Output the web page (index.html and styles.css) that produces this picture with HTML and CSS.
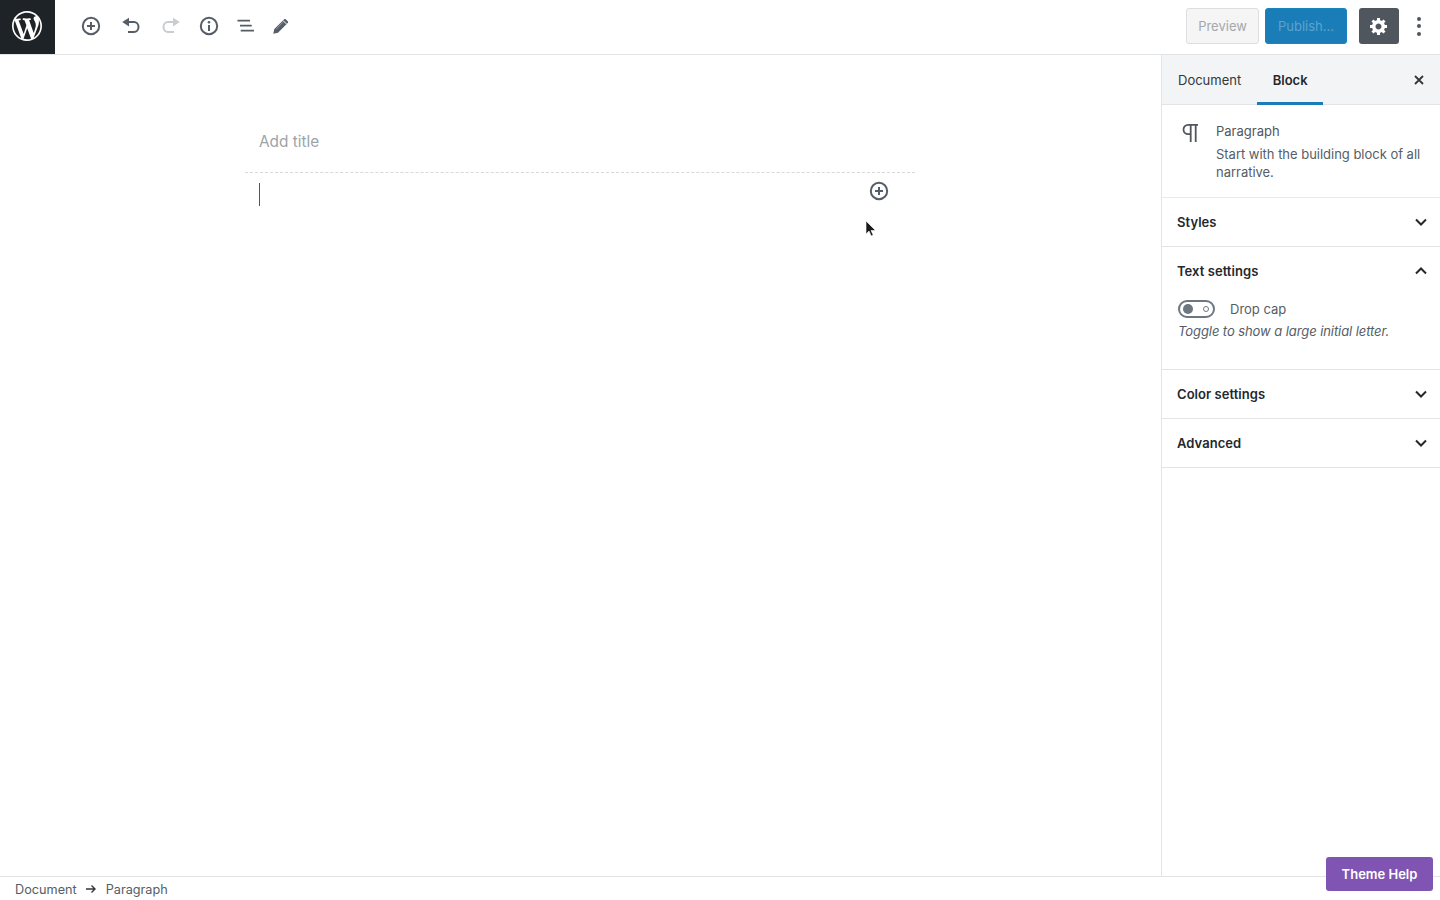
FILE: index.html
```html
<!DOCTYPE html>
<html lang="en">
<head>
<meta charset="utf-8">
<title>Add New Post</title>
<link rel="stylesheet" href="styles.css">
</head>
<body>
<div class="app">
  <header class="topbar">
    <a class="wp-logo">
      <svg viewBox="0 0 20 20" width="30" height="30"><path fill="currentColor" d="M20 10c0-5.51-4.49-10-10-10C4.48 0 0 4.49 0 10c0 5.52 4.48 10 10 10 5.51 0 10-4.48 10-10zM7.78 15.37L4.37 6.22c.55-.02 1.17-.08 1.17-.08.5-.06.44-1.13-.06-1.11 0 0-1.45.11-2.37.11-.18 0-.37 0-.58-.01C4.12 2.69 6.87 1.11 10 1.11c2.33 0 4.45.87 6.05 2.34-.68-.11-1.65.39-1.65 1.58 0 .74.45 1.36.9 2.1.35.61.55 1.36.55 2.46 0 1.49-1.4 5-1.4 5l-3.03-8.37c.54-.02.82-.17.82-.17.5-.05.44-1.25-.06-1.22 0 0-1.44.12-2.38.12-.87 0-2.33-.12-2.33-.12-.5-.03-.56 1.2-.06 1.22l.92.08 1.26 3.41zM17.41 10c.24-.64.74-1.87.43-4.25.7 1.29 1.05 2.71 1.05 4.25 0 3.29-1.73 6.24-4.4 7.78.97-2.59 1.94-5.2 2.92-7.78zM6.1 18.09C3.12 16.65 1.11 13.53 1.11 10c0-1.3.23-2.48.72-3.59C3.25 10.3 4.67 14.2 6.1 18.09zm4.03-6.63l2.58 6.98c-.86.29-1.76.45-2.71.45-.79 0-1.57-.11-2.29-.33.81-2.38 1.62-4.74 2.42-7.1z"/></svg>
    </a>
    <div class="tools">
      <span class="tool"><svg viewBox="0 0 20 20" width="20" height="20"><circle cx="10" cy="10" r="8.2" class="st"/><path d="M10 6v8M6 10h8" class="st"/></svg></span>
      <span class="tool tool-wide"><svg viewBox="0 0 20 20" width="20" height="20"><path d="M7 6h6c2.500 0 4.500 2 4.500 5s-2 5-4.500 5H7" class="st"/><path d="M8 1.800v8.600L1.200 6z" class="fl"/></svg></span>
      <span class="tool tool-wide muted"><svg viewBox="0 0 20 20" width="20" height="20"><path d="M13 6H7c-2.500 0-4.500 2-4.500 5s2 5 4.500 5h6" class="st"/><path d="M12 1.800v8.600L18.800 6z" class="fl"/></svg></span>
      <span class="tool tool-mid"><svg viewBox="0 0 20 20" width="20" height="20"><circle cx="10" cy="10" r="8.2" class="st"/><path d="M10 9v6" class="st"/><circle cx="10" cy="6.200" r="1.300" class="fl"/></svg></span>
      <span class="tool"><svg viewBox="0 0 20 20" width="20" height="20"><path d="M2.500 4.700H15M5 9.700h11.700M5.700 14.700H19" class="st thin"/></svg></span>
      <span class="tool"><svg viewBox="0 0 20 20" width="20" height="20"><path d="M2.300 17.800l1-4.700L13 3.400c.6-.6 1.300-.6 1.900 0l1.800 1.800c.6.6.6 1.300 0 1.900L7 16.800z" class="fl"/><path d="M12 4.500l3.600 3.600" class="slit"/><path d="M5 13.200l7-7" class="slit hair"/></svg></span>
    </div>
    <div class="actions">
      <button class="btn btn-preview">Preview</button>
      <button class="btn btn-publish">Publish...</button>
      <button class="btn btn-settings"><svg viewBox="0 0 20 20" width="20" height="20"><path fill="currentColor" d="M18 12h-2.180c-.17.7-.44 1.350-.81 1.930l1.540 1.540-2.100 2.100-1.540-1.540c-.58.36-1.230.63-1.910.79V19H8v-2.180c-.68-.16-1.330-.43-1.910-.79l-1.540 1.540-2.120-2.120 1.540-1.540c-.36-.58-.63-1.230-.79-1.910H1V9.030h2.170c.16-.7.44-1.350.8-1.940L2.430 5.550l2.100-2.100 1.540 1.540c.58-.37 1.240-.64 1.930-.81V2h3v2.180c.68.16 1.330.43 1.910.79l1.540-1.540 2.120 2.120-1.540 1.540c.36.59.64 1.240.8 1.940H18V12zm-8.500 1.500c1.660 0 3-1.340 3-3s-1.340-3-3-3-3 1.340-3 3 1.340 3 3 3z"/></svg></button>
      <span class="more"><i></i><i></i><i></i></span>
    </div>
  </header>

  <div class="main">
    <main class="editor">
      <div class="column">
        <div class="post-title">Add title</div>
        <div class="block">
          <span class="caret"></span>
          <svg class="inserter" viewBox="0 0 20 20" width="20" height="20"><circle cx="10" cy="10" r="8.200" class="st"/><path d="M10 6v8M6 10h8" class="st"/></svg>
        </div>
      </div>
    </main>

    <aside class="sidebar">
      <div class="tabs">
        <span class="tab">Document</span>
        <span class="tab active">Block</span>
        <svg class="close" viewBox="0 0 12 12" width="12" height="12"><path d="M2 2l8 8M10 2l-8 8"/></svg>
      </div>
      <div class="block-card">
        <svg class="para" viewBox="0 0 20 24" width="20" height="24"><path d="M18 2.800H8.200a4.700 4.700 0 0 0 0 9.400h2.500M10.700 2.800V20M15.700 2.800V20"/></svg>
        <div class="card-body">
          <div class="card-title">Paragraph</div>
          <p class="card-desc">Start with the building block of all narrative.</p>
        </div>
      </div>
      <section class="panel">
        <div class="panel-head"><span>Styles</span><svg class="chev" viewBox="0 0 14 10" width="14" height="10"><path d="M2 2.500l5 5 5-5"/></svg></div>
      </section>
      <section class="panel">
        <div class="panel-head"><span>Text settings</span><svg class="chev" viewBox="0 0 14 10" width="14" height="10"><path d="M2 7.500l5-5 5 5"/></svg></div>
        <div class="panel-body">
          <div class="toggle-row">
            <span class="toggle"><i class="knob"></i><i class="ring"></i></span>
            <span class="toggle-label">Drop cap</span>
          </div>
          <p class="help">Toggle to show a large initial letter.</p>
        </div>
      </section>
      <section class="panel">
        <div class="panel-head"><span>Color settings</span><svg class="chev" viewBox="0 0 14 10" width="14" height="10"><path d="M2 2.500l5 5 5-5"/></svg></div>
      </section>
      <section class="panel">
        <div class="panel-head"><span>Advanced</span><svg class="chev" viewBox="0 0 14 10" width="14" height="10"><path d="M2 2.500l5 5 5-5"/></svg></div>
      </section>
    </aside>
  </div>

  <footer class="crumbs">
    <span>Document</span>
    <svg viewBox="0 0 12 10" width="12" height="10"><path d="M1 5h9M6.500 1.500L10 5 6.500 8.500"/></svg>
    <span>Paragraph</span>
  </footer>
</div>

<button class="theme-help">Theme Help</button>
<svg class="cursor" viewBox="0 0 12 18" width="12" height="18"><path d="M1 1v13l3-3 2.200 5 2-.9L6 10.500h4.500z"/></svg>
</body>
</html>
```
FILE: styles.css
```css
* { box-sizing: border-box; }
html, body { margin: 0; height: 100%; }
body {
  font-family: Inter, "Liberation Sans", sans-serif;
  font-size: 13px;
  color: #32373c;
  background: #fff;
  overflow: hidden;
}
.app { display: flex; flex-direction: column; height: 900px; }

.topbar {
  flex: 0 0 55px;
  display: flex;
  align-items: flex-start;
  border-bottom: 1px solid #e2e4e7;
}
.wp-logo {
  width: 55px;
  height: 54px;
  background: #1e2327;
  color: #fff;
  display: flex;
  align-items: center;
  justify-content: center;
  padding: 0 1px 2px 0;
}
.tools { display: flex; gap: 16px; padding: 16px 0 0 26px; }
.tool { display: block; width: 20px; height: 20px; color: #555d66; }
.tool svg { display: block; }
.tool-wide { margin-left: 4px; }
.tool-mid { margin-left: 2px; }
.tool.muted { color: #c9ccd0; }
.st { fill: none; stroke: currentColor; stroke-width: 2; }
.st.thin { stroke-width: 1.700; }
.fl { fill: currentColor; }
.slit { fill: none; stroke: #fff; stroke-width: 1; }
.slit.hair { stroke-width: .6; opacity: .6; }

.actions { margin-left: auto; display: flex; align-items: center; height: 54px; padding-bottom: 2px; }
.btn {
  font: inherit;
  border-radius: 3px;
  padding: 0;
  display: flex;
  align-items: center;
  justify-content: center;
}
.btn-preview {
  width: 73px; height: 36px;
  background: #f5f5f5;
  border: 1px solid #dcdee0;
  color: #a4a8ac;
  margin-right: 6px;
}
.btn-publish {
  width: 82px; height: 36px;
  background: #1a7db8;
  border: 1px solid #1a84c2;
  color: #5aa4cf;
  margin-right: 12px;
}
.btn-settings {
  width: 40px; height: 36px;
  background: #50565e;
  border: 0;
  color: #fff;
}
.more { display: flex; flex-direction: column; gap: 3.500px; width: 41px; align-items: flex-start; padding-left: 18px; }
.more i { width: 4px; height: 4px; border-radius: 50%; background: #50565e; }

.main { flex: 1; display: flex; min-height: 0; }
.editor { flex: 1; min-width: 0; }
.column { width: 670px; margin-left: 245px; }
.post-title {
  height: 118px;
  border-bottom: 1px dashed #d5d8dc;
  padding: 76px 14px 0;
  font-size: 15.400px;
  line-height: 21px;
  color: #9ea3a8;
}
.block {
  display: flex;
  justify-content: space-between;
  padding: 10px 26px 0 14px;
}
.caret { width: 1px; height: 23px; background: #50565e; }
.inserter { color: #555d66; margin-top: -2px; }

.sidebar {
  flex: 0 0 279px;
  border-left: 1px solid #e2e4e7;
}
.tabs {
  height: 50px;
  background: #f3f4f5;
  border-bottom: 1px solid #e2e4e7;
  display: flex;
  align-items: stretch;
}
.tab {
  padding: 0 16px;
  display: flex;
  align-items: center;
  color: #32373c;
}
.tab.active {
  font-weight: 600;
  color: #23282d;
  border-bottom: 3px solid #1a7db8;
  height: 50px;
  padding: 2px 15.500px 0;
}
.close {
  margin: 19px 15px 0 auto;
  fill: none;
  stroke: #32373c;
  stroke-width: 1.800;
}
.block-card {
  display: flex;
  height: 93px;
  padding: 17px 16px 0 18px;
  border-bottom: 1px solid #e8eaeb;
  color: #555d66;
}
.para { flex: none; margin: 0 16px 0 0; fill: none; stroke: #50565e; stroke-width: 1.800; }
.card-title { line-height: 18px; color: #50575e; }
.card-desc { margin: 5px 0 0; line-height: 18px; letter-spacing: -.02px; }

.panel { border-bottom: 1px solid #e2e4e7; }
.panel-head {
  height: 48px;
  display: flex;
  align-items: center;
  justify-content: space-between;
  padding: 0 12px 0 15px;
  font-weight: 600;
  letter-spacing: .05px;
  color: #23282d;
}
.chev { fill: none; stroke: #23282d; stroke-width: 2; }
.panel-body { height: 74px; padding: 5px 16px 0; }
.toggle-row { display: flex; align-items: center; height: 18px; }
.toggle {
  width: 37px; height: 18px;
  border: 2px solid #6c7781;
  border-radius: 9px;
  display: flex;
  align-items: center;
  justify-content: space-between;
  padding: 0 4px 0 3px;
  margin-right: 15px;
}
.knob { width: 10px; height: 10px; border-radius: 50%; background: #6c7781; }
.ring { width: 6px; height: 6px; border-radius: 50%; border: 1.500px solid #6c7781; }
.toggle-label { color: #555d66; }
.help { margin: 4px 0 0; font-style: italic; line-height: 18px; letter-spacing: -.08px; color: #555d66; }

.crumbs {
  flex: 0 0 24px;
  border-top: 1px solid #e2e4e7;
  display: flex;
  align-items: center;
  gap: 9px;
  padding: 1px 0 0 15px;
  font-size: 12.700px;
  color: #555d66;
}
.crumbs svg { fill: none; stroke: #32373c; stroke-width: 1.400; margin-left: -1px; }

.theme-help {
  position: fixed;
  left: 1326px;
  top: 857px;
  width: 107px;
  height: 34px;
  border: 0;
  border-radius: 3px;
  background: #7f54b3;
  color: #fff;
  font: 600 13px Inter, "Liberation Sans", sans-serif;
}
.cursor {
  position: fixed;
  left: 865px;
  top: 220px;
  fill: #1a1a1a;
  stroke: #fff;
  stroke-width: .6;
}
```
